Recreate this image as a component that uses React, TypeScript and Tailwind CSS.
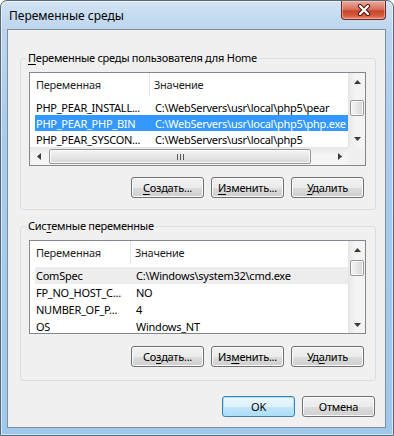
import React from 'react';

type Row = { name: string; value: string };

const userRows: Row[] = [
  { name: 'PHP_PEAR_INSTALL...', value: 'C:\\WebServers\\usr\\local\\php5\\pear' },
  { name: 'PHP_PEAR_PHP_BIN', value: 'C:\\WebServers\\usr\\local\\php5\\php.exe' },
  { name: 'PHP_PEAR_SYSCON...', value: 'C:\\WebServers\\usr\\local\\php5' },
];

const systemRows: Row[] = [
  { name: 'ComSpec', value: 'C:\\Windows\\system32\\cmd.exe' },
  { name: 'FP_NO_HOST_C...', value: 'NO' },
  { name: 'NUMBER_OF_P...', value: '4' },
  { name: 'OS', value: 'Windows_NT' },
];

function Tri({ dir }: { dir: 'up' | 'down' | 'left' | 'right' }) {
  const pts = {
    up: '0,4 3.5,0 7,4',
    down: '0,0 3.5,4 7,0',
    left: '4,0 0,3.5 4,7',
    right: '0,0 4,3.5 0,7',
  }[dir];
  const vertical = dir === 'up' || dir === 'down';
  return (
    <svg width={vertical ? 7 : 4} height={vertical ? 4 : 7} viewBox={vertical ? '0 0 7 4' : '0 0 4 7'}>
      <polygon points={pts} fill="#3b3b3b" />
    </svg>
  );
}

function VScroll({ thumbClass }: { thumbClass: string }) {
  return (
    <div className="flex flex-1 flex-col border-l border-[#e6e6e6] bg-[linear-gradient(to_right,#e9e9e9,#f4f4f4_40%,#f4f4f4)]">
      <div className="flex h-[17px] items-center justify-center">
        <Tri dir="up" />
      </div>
      <div className="flex-1">
        <div
          className={`${thumbClass} mx-[1px] h-[16px] rounded-[2px] border border-[#979797] bg-[linear-gradient(to_right,#f5f5f5,#e6e6e6_50%,#d6d6d6)] shadow-[inset_0_0_0_1px_#fbfbfb]`}
        />
      </div>
      <div className="flex h-[17px] items-center justify-center">
        <Tri dir="down" />
      </div>
    </div>
  );
}

function HScroll() {
  return (
    <div className="flex h-[18px] shrink-0 border-t border-[#e6e6e6] bg-[linear-gradient(to_bottom,#e9e9e9,#f4f4f4_40%,#f4f4f4)]">
      <div className="flex w-[17px] items-center justify-center">
        <Tri dir="left" />
      </div>
      <div className="flex-1 py-[1px]">
        <div className="ml-[2px] flex h-full w-[262px] items-center justify-center gap-[2px] rounded-[2px] border border-[#979797] bg-[linear-gradient(to_bottom,#f5f5f5,#e6e6e6_50%,#d6d6d6)] shadow-[inset_0_0_0_1px_#fbfbfb]">
          <div className="h-[6px] w-[1px] bg-[#555]" />
          <div className="h-[6px] w-[1px] bg-[#555]" />
          <div className="h-[6px] w-[1px] bg-[#555]" />
        </div>
      </div>
      <div className="flex w-[17px] items-center justify-center">
        <Tri dir="right" />
      </div>
    </div>
  );
}

function ListView({
  rows,
  colClass,
  rowClass,
  selected,
  dimmed,
  hscroll,
  thumbClass,
}: {
  rows: Row[];
  colClass: string;
  rowClass: string;
  selected?: number;
  dimmed?: number;
  hscroll?: boolean;
  thumbClass: string;
}) {
  return (
    <div className="flex h-[94px] min-w-0 border border-[#828790] bg-white">
      <div className="flex min-w-0 flex-1 flex-col">
        <div className="flex h-[23px] shrink-0 text-[#1f1f1f]">
          <div className={`${colClass} flex items-center border-r border-[#e3e6ea] pl-[6px]`}>Переменная</div>
          <div className="flex flex-1 items-center pl-[4px]">Значение</div>
        </div>
        <div className="min-h-0 flex-1 overflow-hidden pt-[3px]">
          {rows.map((r, i) => (
            <div
              key={r.name}
              className={`${rowClass} ml-[5px] flex items-center whitespace-nowrap leading-[15px] ${
                i === selected ? 'bg-[#3399ff] text-white' : i === dimmed ? 'bg-[#ededed]' : ''
              }`}
            >
              <div className={`${colClass} overflow-hidden pl-[1px]`}>{r.name}</div>
              <div className="min-w-0 flex-1 overflow-hidden">{r.value}</div>
            </div>
          ))}
        </div>
        {hscroll && <HScroll />}
      </div>
      <div className="flex w-[17px] shrink-0 flex-col">
        <VScroll thumbClass={thumbClass} />
        {hscroll && <div className="h-[18px] bg-[#f0f0f0]" />}
      </div>
    </div>
  );
}

function Btn({ children, primary }: { children: React.ReactNode; primary?: boolean }) {
  return (
    <div
      className={`flex h-[21px] w-[73px] items-center justify-center rounded-[3px] border ${
        primary
          ? 'border-[#3c7fb1] bg-[linear-gradient(to_bottom,#ecf7fd_0%,#dcf1fc_50%,#c3e7fb_50%,#aedcf5_100%)] shadow-[inset_0_0_0_1px_#a8e4fb]'
          : 'border-[#707070] bg-[linear-gradient(to_bottom,#f2f2f2_0%,#ebebeb_50%,#dddddd_50%,#cfcfcf_100%)] shadow-[inset_0_0_0_1px_#fcfcfc]'
      }`}
    >
      <span className="whitespace-nowrap leading-[15px]">{children}</span>
    </div>
  );
}

function U({ children }: { children: React.ReactNode }) {
  return <span className="underline decoration-1 underline-offset-[2px]">{children}</span>;
}

function Group({ legend, children }: { legend: React.ReactNode; children: React.ReactNode }) {
  return (
    <fieldset className="min-w-0 rounded-[3px] border border-[#d5dfe5]">
      <legend className="ml-[5px] px-[2px] leading-[16px]">{legend}</legend>
      {children}
    </fieldset>
  );
}

export default function App() {
  return (
    <div className="flex h-[436px] w-[394px] flex-col rounded-t-[7px] border border-[#5a6877] bg-[linear-gradient(to_bottom,#d2e3f4_0px,#bcd5ee_28px,#a9cdee_120px,#9fc8ec_100%)] font-['Noto_Sans',sans-serif] text-[11px] leading-none tracking-[-0.25px] text-black shadow-[inset_0_0_0_1px_rgba(255,255,255,0.55)]">
      <div className="flex h-[28px] shrink-0 justify-between">
        <div className="self-center pl-[8px] pt-[1px] text-[12px] leading-[16px] tracking-normal">Переменные среды</div>
        <div className="mr-[7px] flex h-[19px] w-[45px] items-center justify-center rounded-b-[4px] border border-t-0 border-[#6e2a22] bg-[linear-gradient(to_bottom,#e9a99b_0%,#d87560_45%,#c8442c_55%,#d45a3e_80%,#e6876a_100%)] shadow-[inset_0_0_0_1px_rgba(255,220,210,0.45)]">
          <svg width="14" height="12" viewBox="0 0 14 12">
            <path d="M3 2 L11 10 M11 2 L3 10" stroke="#4a1610" strokeWidth="4.2" strokeLinecap="round" />
            <path d="M3 2 L11 10 M11 2 L3 10" stroke="#ffffff" strokeWidth="2.2" strokeLinecap="round" />
          </svg>
        </div>
      </div>
      <div className="ml-[6px] mr-[7px] h-[399px] shrink-0 border border-[#7d8e9f] bg-[#f0f0f0]">
        <div className="ml-[12px] mr-[9px] pt-[20px]">
          <Group
            legend={
              <>
                <U>П</U>еременные среды пользователя для Home
              </>
            }
          >
            <div className="pb-[11px] pl-[8px] pr-[9px] pt-[6px]">
              <ListView
                rows={userRows}
                colClass="w-[120px] shrink-0"
                rowClass="h-[16px]"
                selected={1}
                hscroll
                thumbClass="mt-[10px]"
              />
              <div className="mt-[11px] flex justify-end gap-[7px] pr-[2px]">
                <Btn>
                  <U>С</U>оздать...
                </Btn>
                <Btn>
                  <U>И</U>зменить...
                </Btn>
                <Btn>
                  <U>У</U>далить
                </Btn>
              </div>
            </div>
          </Group>
          <div className="mt-[8px]">
            <Group
              legend={
                <>
                  Сис<U>т</U>емные переменные
                </>
              }
            >
              <div className="pb-[13px] pl-[8px] pr-[9px] pt-[6px]">
                <ListView
                  rows={systemRows}
                  colClass="w-[101px] shrink-0"
                  rowClass="h-[17px]"
                  dimmed={0}
                  thumbClass="mt-[2px]"
                />
                <div className="mt-[12px] flex justify-end gap-[7px] pr-[2px]">
                  <Btn>
                    Со<U>з</U>дать...
                  </Btn>
                  <Btn>
                    Из<U>м</U>енить...
                  </Btn>
                  <Btn>
                    Уд<U>а</U>лить
                  </Btn>
                </div>
              </div>
            </Group>
          </div>
          <div className="mt-[15px] flex justify-end gap-[7px] pr-[1px]">
            <Btn primary>OK</Btn>
            <Btn>Отмена</Btn>
          </div>
        </div>
      </div>
    </div>
  );
}
